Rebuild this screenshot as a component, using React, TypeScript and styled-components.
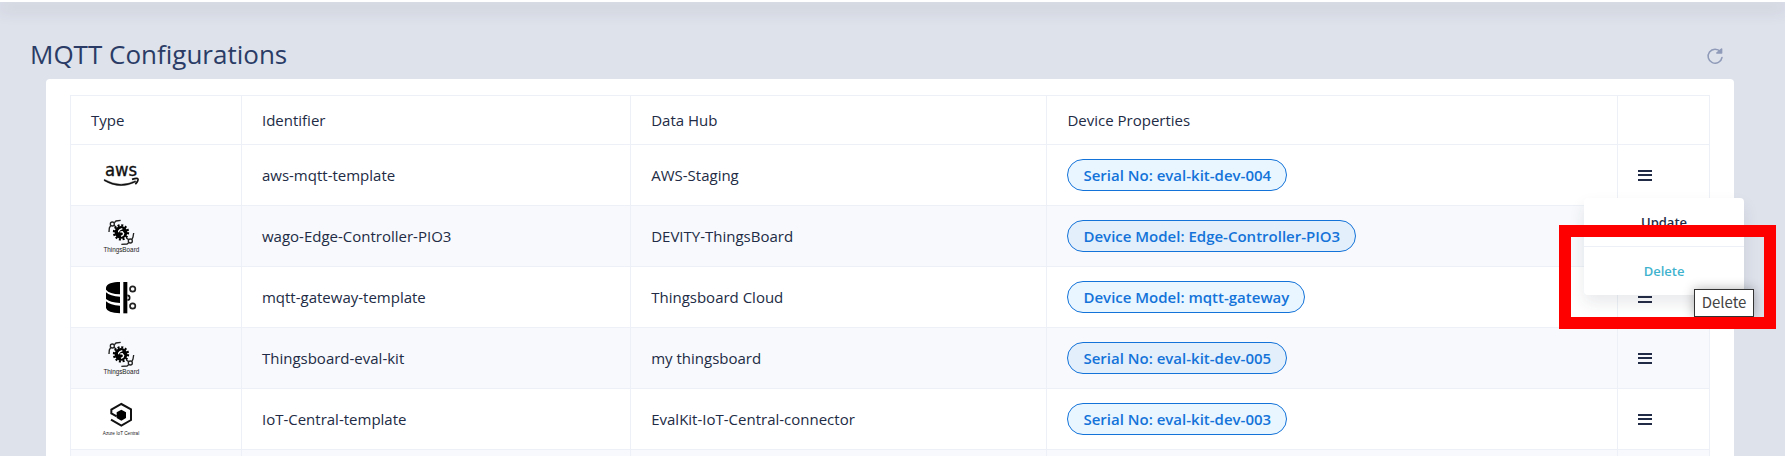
import React from "react";
import styled, { createGlobalStyle } from "styled-components";

const GlobalStyle = createGlobalStyle`
  * { box-sizing: border-box; }
  body {
    margin: 0;
    background: #dee2eb;
    color: #222b45;
    font: 400 15px/20px "Open Sans", sans-serif;
  }
`;

const Page = styled.div`
  height: 100vh;
  overflow: hidden;
`;

const TopBar = styled.div`
  height: 2px;
  background: #ffffff;
  box-shadow: 0 6px 16px 2px rgba(44, 51, 73, 0.16);
`;

const Main = styled.main`
  padding: 36px 51px 0 46px;
`;

const Header = styled.header`
  display: flex;
  align-items: center;
  justify-content: space-between;
  height: 32px;
  margin: 0 10px 9px -16px;
`;

const Title = styled.h1`
  margin: 0;
  font-size: 26px;
  line-height: 32px;
  font-weight: 400;
  color: #2a3c66;
`;

const IconButton = styled.button`
  display: flex;
  padding: 0;
  border: 0;
  background: none;
  color: #222b45;
  cursor: pointer;
`;

const RefreshButton = styled(IconButton)`
  padding-top: 4px;
  color: #8f9bb8;
`;

const Card = styled.section`
  padding: 16px 24px 24px;
  border-radius: 4px;
  background: #ffffff;
`;

const Table = styled.table`
  width: 100%;
  table-layout: fixed;
  border-collapse: collapse;
`;

const HeadCell = styled.th<{ $width: string }>`
  width: ${(p) => p.$width};
  height: 49px;
  padding: 0 20px;
  border: 1px solid #edf1f7;
  font-weight: 400;
  text-align: left;
`;

const Row = styled.tr`
  &:nth-child(even) { background: #f7f9fc; }
`;

const Cell = styled.td`
  height: 61px;
  padding: 0 20px;
  border: 1px solid #edf1f7;
`;

const Logo = styled.svg`
  display: block;
  width: 40px;
  height: 40px;
  margin-left: 10px;
`;

const Chip = styled.span`
  display: inline-flex;
  align-items: center;
  height: 32px;
  padding: 0 15px;
  border: 1px solid #1473d9;
  border-radius: 16px;
  background: #e9f6ff;
  color: #1473d9;
  font-weight: 600;
  white-space: nowrap;
  vertical-align: middle;
  ${Row}:nth-child(even) & { background: #e3effb; }
`;

const Actions = styled.div`
  position: relative;
`;

const Menu = styled.ul`
  position: absolute;
  z-index: 1;
  top: 30px;
  left: -54px;
  width: 160px;
  margin: 0;
  padding: 0;
  list-style: none;
  border-radius: 4px;
  background: #ffffff;
  box-shadow: 0 8px 16px 0 rgba(44, 51, 73, 0.1);
`;

const MenuItem = styled.li`
  & + & { border-top: 1px solid #edf1f7; }
`;

const MenuButton = styled.button<{ $active?: boolean }>`
  width: 100%;
  height: 48px;
  padding: 0;
  border: 0;
  background: none;
  color: ${(p) => (p.$active ? "#3fb3ce" : "#222b45")};
  font: 600 13px/24px "Open Sans", sans-serif;
  cursor: pointer;
`;

const Tooltip = styled.div`
  position: absolute;
  z-index: 2;
  top: 121px;
  left: 56px;
  width: 60px;
  height: 28px;
  border: 1px solid #333333;
  background: #ffffff;
  box-shadow: 0 0 12px rgba(0, 0, 0, 0.3);
  color: #444444;
  font: 400 15px/24px "Noto Sans CJK SC", sans-serif;
  text-align: center;
`;

const Highlight = styled.div`
  position: absolute;
  z-index: 3;
  top: 57px;
  left: -79px;
  width: 217px;
  height: 104px;
  border: 12px solid #ff0000;
  pointer-events: none;
`;

const AwsLogo = () => (
  <Logo viewBox="33 15 120 120" role="img" aria-label="AWS">
    <text x="93" y="78" textAnchor="middle" fontFamily="DejaVu Sans Condensed, DejaVu Sans" fontSize="55" fill="#111" stroke="#111" strokeWidth="1">aws</text>
    <path d="M43 88q48 27 93 4l2 4q-49 24-96-4z" fill="#111" stroke="#111" />
    <path d="M126 88q16-5 18-1t-8 16" fill="none" stroke="#111" strokeWidth="5" />
  </Logo>
);

const ThingsBoardLogo = () => (
  <Logo viewBox="33 18 120 120" role="img" aria-label="ThingsBoard">
    <g fill="none" stroke="#222" strokeWidth="4">
      <circle cx="67" cy="42" r="6" />
      <path d="M73 38l5-5 14-2M62 47l-4 7-1 12M72 46l7 6" />
      <circle cx="121" cy="93" r="6" />
      <path d="M126 88l3-7 2-12M116 98l-5 4-17 1M109 84l7 5" />
    </g>
    <circle cx="93" cy="67" r="19" fill="#000" />
    <circle cx="93" cy="67" r="21" fill="none" stroke="#000" strokeWidth="7" strokeDasharray="6 5" />
    <path d="M86 67v-4l4-4 7-3M93 79l6-3 2-5-4-6-6 1" fill="none" stroke="#fff" strokeWidth="4" />
    <text x="94" y="127" textAnchor="middle" fontFamily="Liberation Sans" fontSize="19" fill="#222">ThingsBoard</text>
  </Logo>
);

const GatewayLogo = () => (
  <Logo viewBox="33 22 120 120" role="img" aria-label="MQTT gateway">
    <path d="M90 37v37q-32-1-42-14V54c2-12 20-17 42-17zM48 68q12 12 42 13v19q-30-1-42-12zM48 95q12 12 42 13v23q-38-1-42-16z" fill="#000" />
    <path d="M100 37h12v94h-12z" fill="#000" />
    <path d="M112 77a7 7 0 0 1 0 14" fill="none" stroke="#111" strokeWidth="5" />
    <g fill="#fff" stroke="#222" strokeWidth="5">
      <circle cx="128" cy="58" r="8" />
      <circle cx="128" cy="109" r="8" />
    </g>
  </Logo>
);

const AzureLogo = () => (
  <Logo viewBox="33 29 120 120" role="img" aria-label="Azure IoT Central">
    <path d="M63 91l31 18 29-17V60L94 44 64 61v11l16 9" fill="none" stroke="#111" strokeWidth="6" />
    <path d="M94 61l14 8v17l-14 8-14-8V69z" fill="#000" />
    <text x="93" y="136" textAnchor="middle" fontFamily="Liberation Sans" fontSize="14" fill="#222">Azure IoT Central</text>
  </Logo>
);

const MenuIcon = () => (
  <svg width="14" height="14" viewBox="0 0 14 14" fill="currentColor" aria-hidden="true">
    <path d="M0 2h14v2H0zM0 6h14v2H0zM0 11h14v2H0z" />
  </svg>
);

const RefreshIcon = () => (
  <svg width="18" height="18" viewBox="0 0 18 18" fill="none" stroke="currentColor" strokeWidth="1.5" strokeLinecap="round" strokeLinejoin="round" aria-hidden="true">
    <path d="M16 10.5A7 7 0 1 1 14.5 4.8" />
    <path d="M15.6 2v4h-4.8l2-1.6z" fill="currentColor" />
  </svg>
);

const columns = [
  { label: "Type", width: "10.43%" },
  { label: "Identifier", width: "23.75%" },
  { label: "Data Hub", width: "25.4%" },
  { label: "Device Properties", width: "34.81%" },
  { label: "", width: "5.61%" },
];

const rows = [
  { Icon: AwsLogo, id: "aws-mqtt-template", hub: "AWS-Staging", property: "Serial No: eval-kit-dev-004", open: true },
  { Icon: ThingsBoardLogo, id: "wago-Edge-Controller-PIO3", hub: "DEVITY-ThingsBoard", property: "Device Model: Edge-Controller-PIO3" },
  { Icon: GatewayLogo, id: "mqtt-gateway-template", hub: "Thingsboard Cloud", property: "Device Model: mqtt-gateway" },
  { Icon: ThingsBoardLogo, id: "Thingsboard-eval-kit", hub: "my thingsboard", property: "Serial No: eval-kit-dev-005" },
  { Icon: AzureLogo, id: "IoT-Central-template", hub: "EvalKit-IoT-Central-connector", property: "Serial No: eval-kit-dev-003" },
];

const RowMenu = () => (
  <>
    <Menu>
      <MenuItem><MenuButton>Update</MenuButton></MenuItem>
      <MenuItem><MenuButton $active>Delete</MenuButton></MenuItem>
    </Menu>
    <Tooltip role="tooltip">Delete</Tooltip>
    <Highlight />
  </>
);

export default function App() {
  return (
    <Page>
      <GlobalStyle />
      <TopBar />
      <Main>
        <Header>
          <Title>MQTT Configurations</Title>
          <RefreshButton aria-label="Refresh"><RefreshIcon /></RefreshButton>
        </Header>
        <Card>
          <Table>
            <thead>
              <tr>
                {columns.map((c) => (
                  <HeadCell key={c.label} $width={c.width}>{c.label}</HeadCell>
                ))}
              </tr>
            </thead>
            <tbody>
              {rows.map(({ Icon, id, hub, property, open }) => (
                <Row key={id}>
                  <Cell><Icon /></Cell>
                  <Cell>{id}</Cell>
                  <Cell>{hub}</Cell>
                  <Cell><Chip>{property}</Chip></Cell>
                  <Cell>
                    <Actions>
                      <IconButton aria-label={`Actions for ${id}`}><MenuIcon /></IconButton>
                      {open && <RowMenu />}
                    </Actions>
                  </Cell>
                </Row>
              ))}
              <Row>
                {columns.map((c) => <Cell key={c.label} />)}
              </Row>
            </tbody>
          </Table>
        </Card>
      </Main>
    </Page>
  );
}
